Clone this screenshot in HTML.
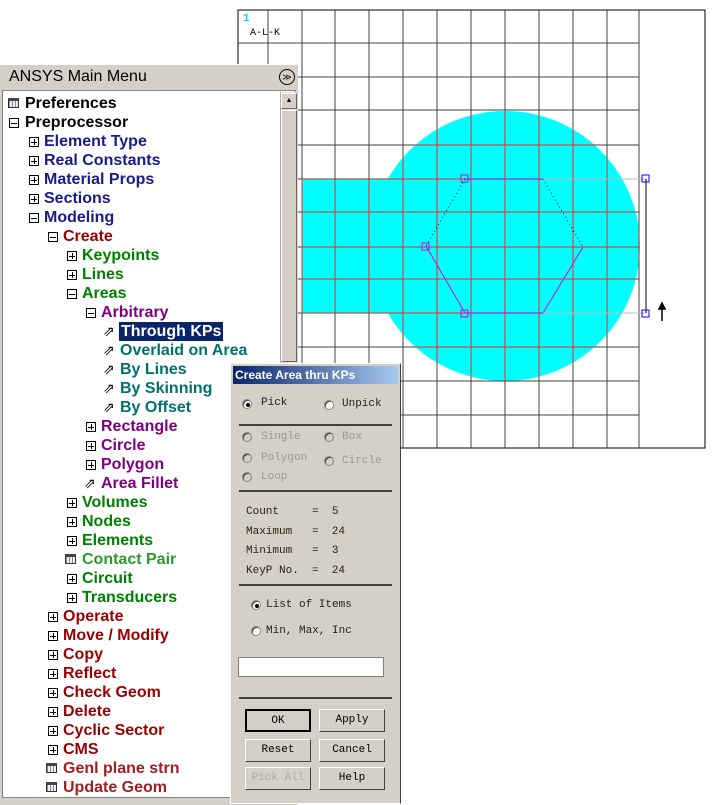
<!DOCTYPE html>
<html><head><meta charset="utf-8"><style>
body{margin:0;width:720px;height:804px;background:#fff;position:relative;overflow:hidden;font-family:"Liberation Sans",Arial,sans-serif}
.p{position:absolute}
.r{position:absolute;height:19px;line-height:19px;font-weight:bold;font-size:16px;white-space:nowrap}
.bx{position:absolute;width:8px;height:8px;border:1px solid #000;top:5px;background:#fff}
.bx:before{content:"";position:absolute;left:1px;top:3.5px;width:6px;height:1px;background:#000}
.pl:after{content:"";position:absolute;left:3.5px;top:1px;width:1px;height:6px;background:#000}
.cal{position:absolute;width:11px;height:10px;top:4px;border:1px solid #333;background:repeating-linear-gradient(90deg,#889 0 1px,#eee 1px 3px);box-sizing:border-box;border-top:3px solid #445}
.ar{position:absolute;top:0;font-size:14px;font-weight:normal;color:#000}
.mono{font-family:"Liberation Mono",monospace;font-size:11px;position:absolute;color:#222}
.rad{position:absolute;width:10px;height:10px;border-radius:50%;background:#fff;border:1px solid #888;box-sizing:border-box;box-shadow:inset 1px 1px 0 #444}
.btn{position:absolute;width:66px;height:23px;border:1px solid #fff;border-right-color:#404040;border-bottom-color:#404040;box-sizing:border-box;text-align:center;line-height:21px;font-family:"Liberation Mono",monospace;font-size:11px;background:#d4d0c8}
.sep{position:absolute;left:8px;width:153px;height:2px;background:#404040}
</style></head><body>
<svg class="p" style="left:0;top:0" width="720" height="460">
<defs><clipPath id="c"><circle cx="505" cy="246" r="135"/><rect x="301" y="179" width="210" height="134"/></clipPath></defs>
<rect x="238" y="10" width="467" height="438" fill="#fff" stroke="#000"/>
<circle cx="505" cy="246" r="135" fill="#00ffff"/>
<rect x="302" y="179" width="210" height="134" fill="#00ffff"/>
<g stroke="#404040" stroke-width="1">
<path d="M268 10V448M302 10V448M335 10V448M369 10V448M403 10V448M437 10V448M471 10V448M505 10V448M539 10V448M573 10V448M607 10V448M639 10V448"/>
<path d="M238 43H639M238 77H639M238 110H639M238 145H639M238 179H639M238 212H639M238 247H639M238 279H639M238 313H639M238 347H639M238 381H639M238 415H639"/>
</g>
<g stroke="#ff2020" clip-path="url(#c)">
<path d="M302 10V448M335 10V448M369 10V448M403 10V448M437 10V448M471 10V448M505 10V448M539 10V448M573 10V448M607 10V448M639 10V448"/>
<path d="M238 145H639M238 179H639M238 212H639M238 247H639M238 279H639M238 313H639M238 347H639"/>
</g>
<path d="M465 179H543M465 313H543" stroke="#c000c0"/>
<path d="M465 179L426 246M543 179L583 247" stroke="#000" stroke-dasharray="1 3"/>
<path d="M426 246L465 313M583 247L543 313" stroke="#e000e0"/>
<path d="M543 179H646M543 313H646" stroke="#bbb"/>
<path d="M646 179V313" stroke="#000"/>
<g fill="none"><rect x="461" y="175" width="7" height="7" stroke="#e000e0"/><rect x="422" y="243" width="7" height="7" stroke="#e000e0"/><rect x="461" y="310" width="7" height="7" stroke="#e000e0"/><rect x="642" y="175" width="7" height="7" stroke="#00f"/><rect x="642" y="310" width="7" height="7" stroke="#00f"/></g>
<path d="M662 321V305M659 309L662 303L665 309Z" stroke="#000" stroke-width="1.5"/>
<text x="243" y="21" fill="#00e0e0" font-family="Liberation Mono" font-size="11" font-weight="bold">1</text>
<text x="250" y="35" fill="#000" font-family="Liberation Mono" font-size="10">A-L-K</text>
</svg>

<div class="p" style="left:0;top:64px;width:298px;height:740px;background:#d4d0c8;border-top:1px solid #fff"></div>
<div class="p" style="left:9px;top:68px;font-size:16px;color:#000">ANSYS Main Menu</div>
<div class="p" style="left:279px;top:69px;width:14px;height:14px;border:1px solid #000;border-radius:50%;font-size:9px;line-height:14px;text-align:center">≫</div>
<div class="p" style="left:2px;top:90px;width:294px;height:708px;background:#fff;border:1px solid #808080;box-sizing:border-box"></div>
<div class="p" style="left:280px;top:92px;width:16px;height:705px;background:#e4e2dc;border-left:1px solid #aaa"></div>
<div class="p" style="left:281px;top:93px;width:14px;height:14px;background:#d4d0c8;border:1px solid #fff;border-right-color:#666;border-bottom-color:#666;font-size:7px;text-align:center;line-height:14px">▲</div>
<div class="p" style="left:281px;top:110px;width:14px;height:250px;background:#d4d0c8;border:1px solid #fff;border-right-color:#666;border-bottom-color:#666"></div>

<div class="r" style="top:94px;left:8px"><span class="cal" style="left:0"></span><span style="position:absolute;left:17px;color:#000">Preferences</span></div>
<div class="r" style="top:113px;left:8px"><span class="bx" style="left:1px"></span><span style="position:absolute;left:17px;color:#000">Preprocessor</span></div>
<div class="r" style="top:132px;left:29px;color:#1a1a8c"><span class="bx pl" style="left:0"></span><span style="position:absolute;left:15px">Element Type</span></div>
<div class="r" style="top:151px;left:29px;color:#1a1a8c"><span class="bx pl" style="left:0"></span><span style="position:absolute;left:15px">Real Constants</span></div>
<div class="r" style="top:170px;left:29px;color:#1a1a8c"><span class="bx pl" style="left:0"></span><span style="position:absolute;left:15px">Material Props</span></div>
<div class="r" style="top:189px;left:29px;color:#1a1a8c"><span class="bx pl" style="left:0"></span><span style="position:absolute;left:15px">Sections</span></div>
<div class="r" style="top:208px;left:29px;color:#1a1a8c"><span class="bx" style="left:0"></span><span style="position:absolute;left:15px">Modeling</span></div>
<div class="r" style="top:227px;left:48px;color:#990000"><span class="bx" style="left:0"></span><span style="position:absolute;left:15px">Create</span></div>
<div class="r" style="top:246px;left:67px;color:#008000"><span class="bx pl" style="left:0"></span><span style="position:absolute;left:15px">Keypoints</span></div>
<div class="r" style="top:265px;left:67px;color:#008000"><span class="bx pl" style="left:0"></span><span style="position:absolute;left:15px">Lines</span></div>
<div class="r" style="top:284px;left:67px;color:#008000"><span class="bx" style="left:0"></span><span style="position:absolute;left:15px">Areas</span></div>
<div class="r" style="top:303px;left:86px;color:#800080"><span class="bx" style="left:0"></span><span style="position:absolute;left:15px">Arbitrary</span></div>
<div class="r" style="top:322px;left:103px;color:#fff"><span class="ar">⇗</span><span style="position:absolute;left:16px;background:#0a246a;padding:0 2px;height:19px">Through KPs</span></div>
<div class="r" style="top:341px;left:103px;color:#007070"><span class="ar">⇗</span><span style="position:absolute;left:17px">Overlaid on Area</span></div>
<div class="r" style="top:360px;left:103px;color:#007070"><span class="ar">⇗</span><span style="position:absolute;left:17px">By Lines</span></div>
<div class="r" style="top:379px;left:103px;color:#007070"><span class="ar">⇗</span><span style="position:absolute;left:17px">By Skinning</span></div>
<div class="r" style="top:398px;left:103px;color:#007070"><span class="ar">⇗</span><span style="position:absolute;left:17px">By Offset</span></div>
<div class="r" style="top:417px;left:86px;color:#800080"><span class="bx pl" style="left:0"></span><span style="position:absolute;left:15px">Rectangle</span></div>
<div class="r" style="top:436px;left:86px;color:#800080"><span class="bx pl" style="left:0"></span><span style="position:absolute;left:15px">Circle</span></div>
<div class="r" style="top:455px;left:86px;color:#800080"><span class="bx pl" style="left:0"></span><span style="position:absolute;left:15px">Polygon</span></div>
<div class="r" style="top:474px;left:84px;color:#800080"><span class="ar">⇗</span><span style="position:absolute;left:17px">Area Fillet</span></div>
<div class="r" style="top:493px;left:67px;color:#008000"><span class="bx pl" style="left:0"></span><span style="position:absolute;left:15px">Volumes</span></div>
<div class="r" style="top:512px;left:67px;color:#008000"><span class="bx pl" style="left:0"></span><span style="position:absolute;left:15px">Nodes</span></div>
<div class="r" style="top:531px;left:67px;color:#008000"><span class="bx pl" style="left:0"></span><span style="position:absolute;left:15px">Elements</span></div>
<div class="r" style="top:550px;left:65px;color:#2e9a2e"><span class="cal" style="left:0"></span><span style="position:absolute;left:17px">Contact Pair</span></div>
<div class="r" style="top:569px;left:67px;color:#008000"><span class="bx pl" style="left:0"></span><span style="position:absolute;left:15px">Circuit</span></div>
<div class="r" style="top:588px;left:67px;color:#008000"><span class="bx pl" style="left:0"></span><span style="position:absolute;left:15px">Transducers</span></div>
<div class="r" style="top:607px;left:48px;color:#990000"><span class="bx pl" style="left:0"></span><span style="position:absolute;left:15px">Operate</span></div>
<div class="r" style="top:626px;left:48px;color:#990000"><span class="bx pl" style="left:0"></span><span style="position:absolute;left:15px">Move / Modify</span></div>
<div class="r" style="top:645px;left:48px;color:#990000"><span class="bx pl" style="left:0"></span><span style="position:absolute;left:15px">Copy</span></div>
<div class="r" style="top:664px;left:48px;color:#990000"><span class="bx pl" style="left:0"></span><span style="position:absolute;left:15px">Reflect</span></div>
<div class="r" style="top:683px;left:48px;color:#990000"><span class="bx pl" style="left:0"></span><span style="position:absolute;left:15px">Check Geom</span></div>
<div class="r" style="top:702px;left:48px;color:#990000"><span class="bx pl" style="left:0"></span><span style="position:absolute;left:15px">Delete</span></div>
<div class="r" style="top:721px;left:48px;color:#990000"><span class="bx pl" style="left:0"></span><span style="position:absolute;left:15px">Cyclic Sector</span></div>
<div class="r" style="top:740px;left:48px;color:#990000"><span class="bx pl" style="left:0"></span><span style="position:absolute;left:15px">CMS</span></div>
<div class="r" style="top:759px;left:46px;color:#a02020"><span class="cal" style="left:0"></span><span style="position:absolute;left:17px">Genl plane strn</span></div>
<div class="r" style="top:778px;left:46px;color:#a02020"><span class="cal" style="left:0"></span><span style="position:absolute;left:17px">Update Geom</span></div>

<div class="p" style="left:230px;top:363px;width:171px;height:441px;background:#d4d0c8;border:1px solid #fff;border-right:1px solid #404040;box-sizing:border-box">
<div class="p" style="left:2px;top:2px;width:165px;height:18px;background:linear-gradient(90deg,#0a246a,#a6caf0);color:#fff;font-weight:bold;font-size:12px;line-height:18px;padding-left:2px;box-sizing:border-box">Create Area thru KPs</div>
<div class="rad" style="left:11px;top:35px"><div style="position:absolute;left:2.5px;top:2.5px;width:4px;height:4px;border-radius:50%;background:#000"></div></div>
<div class="mono" style="left:30px;top:33px">Pick</div>
<div class="rad" style="left:93px;top:36px"></div>
<div class="mono" style="left:111px;top:34px">Unpick</div>
<div class="sep" style="top:60px"></div>
<div class="rad" style="left:11px;top:68px;background:#d4d0c8"></div><div class="mono" style="left:30px;top:67px;color:#999">Single</div>
<div class="rad" style="left:93px;top:68px;background:#d4d0c8"></div><div class="mono" style="left:111px;top:67px;color:#999">Box</div>
<div class="rad" style="left:11px;top:89px;background:#d4d0c8"></div><div class="mono" style="left:30px;top:88px;color:#999">Polygon</div>
<div class="rad" style="left:93px;top:92px;background:#d4d0c8"></div><div class="mono" style="left:111px;top:91px;color:#999">Circle</div>
<div class="rad" style="left:11px;top:108px;background:#d4d0c8"></div><div class="mono" style="left:30px;top:107px;color:#999">Loop</div>
<div class="sep" style="top:126px"></div>
<div class="mono" style="left:15px;top:139px;white-space:pre;line-height:19.5px;color:#302010">Count     =  5
Maximum   =  24
Minimum   =  3
KeyP No.  =  24</div>
<div class="sep" style="top:220px"></div>
<div class="rad" style="left:20px;top:236px"><div style="position:absolute;left:2.5px;top:2.5px;width:4px;height:4px;border-radius:50%;background:#000"></div></div>
<div class="mono" style="left:35px;top:235px">List of Items</div>
<div class="rad" style="left:20px;top:262px"></div>
<div class="mono" style="left:35px;top:261px">Min, Max, Inc</div>
<div class="p" style="left:7px;top:293px;width:146px;height:20px;background:#fff;border:1px solid #808080;box-sizing:border-box"></div>
<div class="sep" style="top:333px"></div>
<div class="btn" style="left:14px;top:345px;border:2px solid #000">OK</div>
<div class="btn" style="left:88px;top:345px">Apply</div>
<div class="btn" style="left:14px;top:375px">Reset</div>
<div class="btn" style="left:88px;top:375px">Cancel</div>
<div class="btn" style="left:14px;top:403px;color:#aaa">Pick All</div>
<div class="btn" style="left:88px;top:403px">Help</div>
</div>
</body></html>
